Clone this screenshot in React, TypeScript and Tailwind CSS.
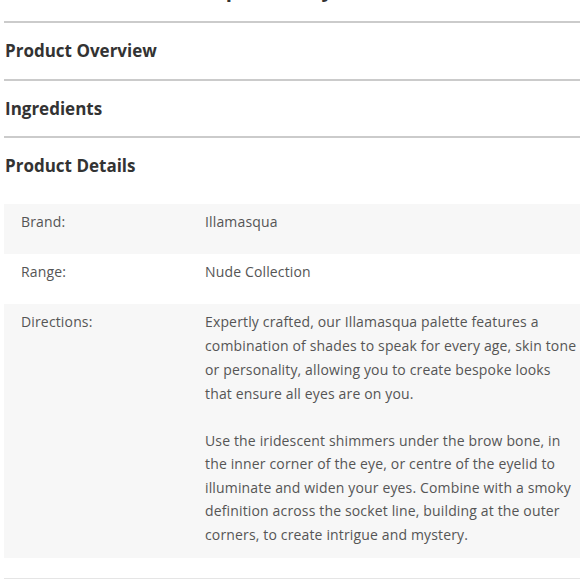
import React from "react";

const font = { fontFamily: "'Open Sans', 'Noto Sans', sans-serif" };

export default function App() {
  return (
    <div className="w-[580px] h-[580px] overflow-hidden bg-white pl-[4px]" style={font}>
      <div className="h-[23px] border-b-2 border-[#cbcbcb] overflow-hidden">
        <div className="-mt-[22px] pl-[1px] text-[20px] font-bold text-[#333] leading-[24px] whitespace-nowrap">
          Nude Palette, Illamasqua Beauty
        </div>
      </div>
      <div className="h-[58px] flex items-center pl-[1px] border-b-2 border-[#cbcbcb] text-[17px] font-bold text-[#333]">
        Product Overview
      </div>
      <div className="h-[57px] flex items-center pl-[1px] border-b-2 border-[#cbcbcb] text-[17px] font-bold text-[#333]">
        Ingredients
      </div>
      <div className="h-[56px] flex items-center pl-[1px] text-[17px] font-bold text-[#333]">
        Product Details
      </div>
      <div className="mt-[10px] text-[14px] text-[#555] leading-[24px] tracking-[0.15px]">
        <div className="bg-[#f7f7f7] h-[50px] flex pt-[6px]">
          <div className="w-[201px] pl-[17px] shrink-0">Brand:</div>
          <div>Illamasqua</div>
        </div>
        <div className="bg-white h-[50px] flex pt-[6px]">
          <div className="w-[201px] pl-[17px] shrink-0">Range:</div>
          <div>Nude Collection</div>
        </div>
        <div className="bg-[#f7f7f7] h-[254px] flex pt-[6px]">
          <div className="w-[201px] pl-[17px] shrink-0">Directions:</div>
          <div className="pr-[2px]">
            <p className="mb-[23px]">
              Expertly crafted, our Illamasqua palette features a combination of shades to speak for every age, skin tone or personality, allowing you to create bespoke looks that ensure all eyes are on you.
            </p>
            <p className="leading-[23.4px]">
              Use the iridescent shimmers under the brow bone, in the inner corner of the eye, or centre of the eyelid to illuminate and widen your eyes. Combine with a smoky definition across the socket line, building at the outer corners, to create intrigue and mystery.
            </p>
          </div>
        </div>
        <div className="h-[20px]" />
        <div className="border-t border-[#e5e5e5]" />
      </div>
    </div>
  );
}
